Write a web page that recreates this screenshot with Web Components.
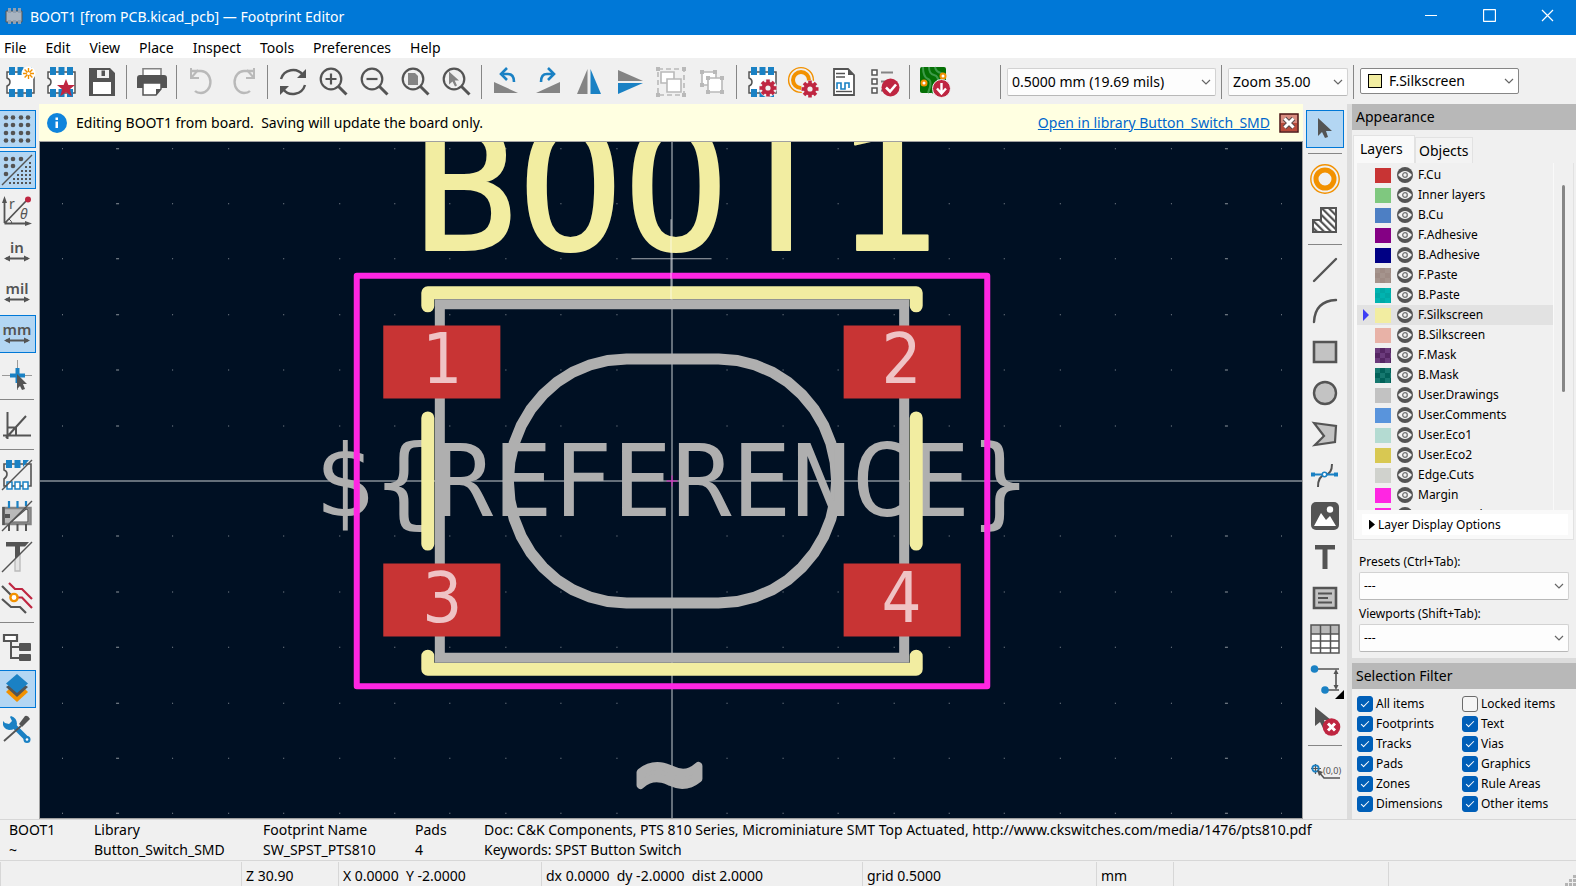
<!DOCTYPE html>
<html lang="en">
<head>
<meta charset="utf-8">
<title>Footprint Editor</title>
<style>
html,body{margin:0;height:100%}
body{font:14px/20px "Noto Sans","Open Sans",sans-serif;color:#000;background:#f0f0f0}
</style>
</head>
<body>
<footprint-editor></footprint-editor>

<script>
const D='#545454', B='#1a81c4', R='#bf2641', O='#f29100', G='#b9b9b9';

const body=`<path d="M2 5v6q3 1 3 4t-3 4v7h27V5z" fill="#fff" stroke="${D}" stroke-width="1.5"/>`;
const pads=`<path d="M4 0h6v8H4zM12.500 0h6v8h-6zM21 0h6v8h-6zM4 22h6v8H4zM12.500 22h6v8h-6zM21 22h6v8h-6z" fill="${B}"/>`;
const gear=(x,y)=>`<g transform="translate(${x} ${y})"><circle r="9" fill="#f0f0f0"/>${[0,45,90,135].map(a=>`<path d="M-1.800-8.500h3.600v17h-3.600z" fill="${R}" transform="rotate(${a})"/>`).join('')}<circle r="6.300" fill="${R}"/><circle r="2.600" fill="#f0f0f0"/></g>`;
const lens=`<circle cx="12" cy="12" r="10.300" fill="none" stroke="${D}" stroke-width="2.200"/><path d="M19.500 19.500l8 8" stroke="${D}" stroke-width="3"/>`;
const arrowEnds=`<path d="M4 21.500h22" stroke="${D}" stroke-width="2"/><path d="M2 21.500l6-3v6zM28 21.500l-6-3v6z" fill="${D}"/>`;
const unit=t=>`<text x="15" y="16" text-anchor="middle" font-size="15" font-weight="600" fill="${D}">${t}</text>${arrowEnds}`;

const ICONS={
 new:body+pads+`<circle cx="23.500" cy="6.500" r="7" fill="#fff"/><path d="M23.500 1v11M18 6.500h11M19.600 2.600l7.800 7.800M27.400 2.600l-7.800 7.800" stroke="${O}" stroke-width="1.400"/><circle cx="23.500" cy="6.500" r="1.600" fill="#fff"/>`,
 lib:body+pads+`<path d="M20 12l2.400 6h6.600l-5.200 4.200 2 7-5.800-4-5.800 4 2-7L11 18h6.600z" fill="${R}"/>`,
 save:`<path d="M3 1h20l5 5v23H2V1zM10 3v8h12V3zM7 16v11h16V16z" fill="${D}" fill-rule="evenodd"/><path d="M10 3h12v8H10z" fill="#f0f0f0"/><path d="M14.500 3.500h3.500v5.500h-3.500z" fill="${D}"/><path d="M6 15h18v12H6z" fill="#fff"/>`,
 print:`<path d="M6 1.800h18v8H6z" fill="#fff" stroke="#848484" stroke-width="1.600"/><path d="M3 8h24q3 0 3 3v10h-6v-4H6v4H0V11q0-3 3-3z" fill="${D}"/><path d="M6 16h18v6l-5 6H6z" fill="#fff" stroke="${D}" stroke-width="1.500"/><path d="M19 28v-6h5z" fill="${D}"/>`,
 undo:`<path d="M5 4h9a9 10.500 0 0 1 0 22q-4 0-6-2" fill="none" stroke="${G}" stroke-width="2.400"/><path d="M4 1v10h8" fill="none" stroke="${G}" stroke-width="2"/><path d="M4 11l7-8" stroke="${G}" stroke-width="2"/>`,
 redo:`<path d="M25 4h-9a9 10.500 0 0 0 0 22q4 0 6-2" fill="none" stroke="${G}" stroke-width="2.400"/><path d="M26 1v10h-8" fill="none" stroke="${G}" stroke-width="2"/><path d="M26 11l-7-8" stroke="${G}" stroke-width="2"/>`,
 refresh:`<path d="M3 12a12.500 12.500 0 0 1 22-4M27 18a12.500 12.500 0 0 1-22 4" fill="none" stroke="${D}" stroke-width="2.400"/><path d="M28 2v9h-9z" fill="${D}"/><path d="M2 28v-9h9z" fill="${D}"/>`,
 zin:lens+`<path d="M12 6.500v11M6.500 12h11" stroke="${D}" stroke-width="2.200"/>`,
 zout:lens+`<path d="M6.500 12h11" stroke="${D}" stroke-width="2.200"/>`,
 zfit:lens+`<path d="M7 6h7l3 3v9H7z" fill="#848484"/>`,
 zsel:lens+`<path d="M7 4.500v13l3.500-3 2.500 5 2-1-2.300-5H17z" fill="#848484"/>`,
 ccw:`<path d="M2 15v11h24z" fill="#848484"/><path d="M11 7h5q6 0 6 8" fill="none" stroke="${B}" stroke-width="2.600"/><path d="M15 1L9 7l6 6" fill="none" stroke="${B}" stroke-width="2.600"/>`,
 cw:`<path d="M27 15v11H3z" fill="#848484"/><path d="M19 7h-5q-6 0-6 8" fill="none" stroke="${B}" stroke-width="2.600"/><path d="M15 1l6 6-6 6" fill="none" stroke="${B}" stroke-width="2.600"/>`,
 mirh:`<path d="M13.500 2v25H3z" fill="#848484"/><path d="M16.500 2v25H27z" fill="${B}"/>`,
 mirv:`<path d="M3 3v11h25z" fill="#848484"/><path d="M3 27V16h25z" fill="${B}"/>`,
 group:`<path d="M2 2h26v26H2z" fill="none" stroke="${G}" stroke-width="1.600" stroke-dasharray="5 3"/><path d="M0 0h4v4H0zM26 0h4v4h-4zM0 26h4v4H0zM26 26h4v4h-4z" fill="${G}"/><path d="M5 5h13v11H5z" fill="#fff" stroke="${G}" stroke-width="1.600"/><path d="M11 12h14v13H11z" fill="#fff" stroke="${G}" stroke-width="1.600"/>`,
 ungroup:`<path d="M5 5h14v13H5z" fill="#fff" stroke="${G}" stroke-width="1.600"/><path d="M11 11h14v14H11z" fill="#fff" stroke="${G}" stroke-width="1.600"/><path d="M3 3h4v4H3zM16 3h4v4h-4zM3 16h4v4H3zM9 9h4v4H9zM23 9h4v4h-4zM9 23h4v4H9zM23 23h4v4h-4z" fill="${G}"/>`,
 fpset:body+pads+gear(21,21),
 padset:`<circle cx="13" cy="13" r="12.400" fill="none" stroke="${O}" stroke-width="1.400"/><circle cx="13" cy="13" r="8" fill="none" stroke="${O}" stroke-width="4"/>`+gear(22,22),
 sheet:`<path d="M5 2h14l6 6v20H5z" fill="#fff" stroke="${D}" stroke-width="1.800"/><path d="M19 2v6h6z" fill="${D}"/><path d="M7 6.500h9M7 10h9" stroke="${D}" stroke-width="1.300"/><path d="M7 24.500h16" stroke="${D}" stroke-width="1.400"/><path d="M8 22v-6h4v6h4v-6h4v5" fill="none" stroke="${B}" stroke-width="1.600"/>`,
 drc:`<path d="M2 3h5v5H2zM2 12h5v5H2zM2 21h5v5H2z" fill="#fff" stroke="${D}" stroke-width="1.500"/><path d="M11 5.500h12M11 14.500h7M11 23.500h3" stroke="#848484" stroke-width="2"/><circle cx="20.500" cy="20.500" r="9" fill="${R}"/><path d="M16 20.500l4 4 6-7" fill="none" stroke="#fff" stroke-width="2.600"/>`,
 board:`<rect width="26" height="26" rx="2" fill="#057005"/><path d="M9 0q0 7 5 8t4 8-6 10M15 0q1 5 6 6t3 8M3 0q0 10 5 12t0 14" fill="none" stroke="#3d9a4a" stroke-width="2"/><circle cx="4" cy="16" r="2.500" fill="#fff" stroke="${O}" stroke-width="2"/><circle cx="23" cy="9" r="2.500" fill="#fff" stroke="${O}" stroke-width="2"/><circle cx="21.500" cy="21.500" r="9" fill="${R}" stroke="#f0f0f0"/><path d="M21.500 16v10M17 21.500l4.500 5 4.500-5" fill="none" stroke="#fff" stroke-width="2.400"/>`,
 grid:[3.5,11,19,26.5].map(y=>[4,11,19,26].map(x=>`<circle cx="${x}" cy="${y}" r="2.300" fill="${D}"/>`).join('')).join(''),
 gridov:`<path d="M0 30L30 0" stroke="${D}" stroke-width="1.400"/>`+[[4,4],[11,4],[19,4],[4,11],[11,11],[4,19]].map(p=>`<circle cx="${p[0]}" cy="${p[1]}" r="2.300" fill="${D}"/>`).join('')+[8,12,16,20,24,28].map((y,j)=>[28,24,20,16,12,8].slice(0,j+1).map(x=>`<rect x="${x-1}" y="${y-1}" width="2" height="2" fill="${D}"/>`).join('')).join(''),
 polar:`<path d="M2.500 27V4M2.500 27.500H26M2.500 27.500L25 4" stroke="${D}" stroke-width="1.800" fill="none"/><path d="M0 7l2.500-7L5 7zM23 25l7 2.500-7 2.500z" fill="${D}"/><circle cx="26" cy="3.500" r="3" fill="${R}"/><text x="7" y="13" font-size="14" fill="${D}">r</text><text x="18" y="23" font-size="14" font-style="italic" fill="${D}">θ</text><path d="M7 23q3 2 3 5" stroke="${D}" fill="none"/>`,
 inch:unit('in'), mil:unit('mil'), mm:unit('mm'),
 cross:`<path d="M0 15.500h30M15.500 0v30" stroke="#9a9a9a" stroke-width="1"/><path d="M15.500 8v15M8 15.500h15" stroke="${B}" stroke-width="4"/><path d="M15 14v15l3-3 2 4 3-1-2-5h4z" fill="${D}"/>`,
 angle:`<path d="M5.500 2v27M1 25.500h28M4 28L24 6M5 17.500h9v8" fill="none" stroke="${D}" stroke-width="2"/>`,
 padsk:`<path d="M2 4v6q3 1 3 4t-3 5v7h27V4z" fill="none" stroke="${D}" stroke-width="1.600"/><path d="M4 0h6v8H4zM12.500 0h6v8h-6zM21 0h6L21 7z" fill="${B}"/><path d="M5 22h5v7H5zM13 22h5v7h-5zM21 22h5v7h-5z" fill="#fff" stroke="${B}" stroke-width="1.500"/><path d="M0 30L30 0" stroke="${D}" stroke-width="1.400"/>`,
 chipsk:`<path d="M1.500 7h27v16h-27z" fill="#b9b9b9" stroke="#848484" stroke-width="2.500"/><path d="M26 9v12H9L24 8z" fill="#f0f0f0" stroke="${D}" stroke-width="1.200"/><path d="M1.500 6v18" stroke="${D}" stroke-width="2.500"/><path d="M3 13h5v4H3z" fill="${D}"/><path d="M7 0v7M15.500 0v7M24 0v5" stroke="${B}" stroke-width="2.200"/><path d="M7 23v7M15.500 23v7M24 23v7" stroke="${D}" stroke-width="2"/><path d="M0 30L30 0" stroke="${D}" stroke-width="1.400"/>`,
 textsk:`<path d="M4 0h23l-4 4.500h-5V12l-5 5V4.500H4z" fill="${D}"/><path d="M13 17v12h5V12" fill="#e4e4e4" stroke="#b9b9b9" stroke-width="1.300"/><path d="M0 30L30 0" stroke="${D}" stroke-width="1.400"/>`,
 contrast:`<path d="M0 3l10 10M0 16l9 8h9l6 6" fill="none" stroke="${D}" stroke-width="2.200"/><path d="M7 0l6 6h7l10 10M15 14.500h5L30 25" fill="none" stroke="${R}" stroke-width="2.200"/><circle cx="12" cy="14.500" r="3.600" fill="#fff" stroke="${O}" stroke-width="2.400"/>`,
 tree:`<path d="M2 2h13v6H2z" fill="#fff" stroke="${D}" stroke-width="2.200"/><path d="M9 9v16h8M9 14h8" fill="none" stroke="${D}" stroke-width="2"/><rect x="17" y="10" width="12" height="8" rx="1" fill="${D}"/><rect x="17" y="21" width="12" height="7" rx="1" fill="${D}"/>`,
 layers:`<path d="M4 18l11 10 11-10-3-3H7z" fill="${O}"/><path d="M4 13l11 10 11-10-3-2H7z" fill="${D}"/><path d="M15 0l11 9.500L15 19 4 9.500z" fill="${B}"/>`,
 tools:`<path d="M9 8l16 16" stroke="${B}" stroke-width="5"/><path d="M1 6q-1 8 6 9 7 0 8-6 0-6-6-8l-1 1 2 4-3 3-4-1z" fill="${B}"/><circle cx="25" cy="24.500" r="3.500" fill="${B}"/><circle cx="25" cy="24.500" r="1.300" fill="#fff"/><path d="M2 26L19 11" stroke="${D}" stroke-width="1.800"/><path d="M17 9l6-8q3-1 5 3l-8 8z" fill="${D}"/>`,
 select:`<path d="M8 4v18l4-4 3 6 3-1-2-6h6z" fill="${D}"/>`,
 pad:`<circle cx="15" cy="15" r="14.200" fill="none" stroke="${O}" stroke-width="1.400"/><circle cx="15" cy="15" r="9" fill="none" stroke="${O}" stroke-width="5"/>`,
 zone:`<defs><pattern id="h" width="5" height="5" patternUnits="userSpaceOnUse" patternTransform="rotate(-45)"><path d="M0 0h2.200v5H0z" fill="${D}"/></pattern></defs><path d="M11 3h15v24H3V15h8z" fill="#fff"/><path d="M11 3h15v24H3V15h8z" fill="url(#h)" stroke="${D}" stroke-width="2"/>`,
 line:`<path d="M4 26L26 4" stroke="${D}" stroke-width="2.400" stroke-linecap="round"/>`,
 arc:`<path d="M4 26Q5 5 26 4" fill="none" stroke="${D}" stroke-width="2.400" stroke-linecap="round"/>`,
 rect:`<path d="M4 5h22v20H4z" fill="#c3c3c3" stroke="${D}" stroke-width="2.600"/>`,
 circle:`<circle cx="15" cy="15" r="11" fill="#c3c3c3" stroke="${D}" stroke-width="2.400"/>`,
 poly:`<path d="M4 4l22 3-1 16-20 3 9-9z" fill="#c3c3c3" stroke="${D}" stroke-width="2.200"/>`,
 bezier:`<path d="M8 27q0-11 7-12t7-11" fill="none" stroke="${D}" stroke-width="2"/><path d="M4 14.500h22" stroke="${B}" stroke-width="2"/><path d="M1 12.500h4v4H1zM24 12.500h4v4h-4z" fill="${B}"/><circle cx="14.500" cy="14.500" r="2.200" fill="#fff" stroke="${B}" stroke-width="1.500"/>`,
 image:`<rect x="1" y="1" width="28" height="28" rx="5" fill="${D}"/><path d="M4 25l7-13 5 7 4-4 6 10z" fill="#fff"/><circle cx="20" cy="8.500" r="3.200" fill="#fff"/>`,
 text:`<path d="M5 3h20v4.500h-7.500V27h-5V7.500H5z" fill="${D}"/>`,
 textbox:`<path d="M4 5h22v20H4z" fill="#c3c3c3" stroke="${D}" stroke-width="2.600"/><path d="M8 10.500h14M8 15h10M8 19.500h14" stroke="${D}" stroke-width="2"/>`,
 table:`<path d="M1 1h28v28H1z" fill="#fff"/><path d="M1 1h28v9H1z" fill="#b9b9b9"/><path d="M1 1h28v28H1zM1 10h28M1 17h28M1 24h28M10.500 1v28M20.500 1v28" fill="none" stroke="${D}" stroke-width="1.500"/>`,
 dim:`<path d="M4 4h25M15 25h14M26 6v17" stroke="${D}" stroke-width="1.600"/><path d="M26 4l2.500 5h-5zM26 25l2.500-5h-5z" fill="${D}"/><circle cx="4.500" cy="4" r="3.800" fill="${B}"/><circle cx="15" cy="25" r="3.800" fill="${B}"/><path d="M34 25v9h-9z"/>`,
 del:`<path d="M5 1v19l5-4 3 6 4-1-3-7h7z" fill="${D}"/><circle cx="21.500" cy="21" r="8.800" fill="${R}"/><path d="M18 17.500l7 7M25 17.500l-7 7" stroke="#fff" stroke-width="3"/>`,
 anchor:`<path d="M5.500 8v10M1 12.500h10" stroke="${D}" stroke-width="1.200"/><circle cx="5.500" cy="12.500" r="3.200" fill="none" stroke="${B}" stroke-width="1.800"/><path d="M8 15l6 7h16" fill="none" stroke="${D}" stroke-width="1.600"/><path d="M7 14l6 2-4 4z" fill="${D}"/><text x="13" y="18" font-size="9" fill="${D}">(0,0)</text>`
};

const define=(name,html,setup)=>customElements.define(name,class extends HTMLElement{
  connectedCallback(){
    if(this.shadowRoot)return;
    const root=this.attachShadow({mode:'open'});
    root.innerHTML=typeof html==='function'?html(this):html;
    if(setup)setup(root,this);
  }
});

define('tool-button',el=>`<style>
:host{display:block;flex:none;width:38px;height:38px}
button{display:block;width:38px;height:38px;padding:3px;border:1px solid transparent;background:none;font:inherit}
:host([active]) button{background:#b3d6f3;border-color:#0078d7}
svg{display:block;width:30px;height:30px;overflow:visible}
</style><button type="button" aria-label="${el.getAttribute('label')}" ${el.hasAttribute('off')?'disabled':''}><svg viewBox="0 0 30 30" aria-hidden="true">${ICONS[el.getAttribute('icon')]}</svg></button>`);

define('tool-rule',`<style>
:host{display:block;flex:none;width:6px;height:34px;background:linear-gradient(#868686,#868686) 2px 0/1px 100% no-repeat}
:host([flat]){width:34px;height:6px;background:linear-gradient(#868686,#868686) 0 2px/100% 1px no-repeat}
</style>`);

const tools=(list,flat)=>list.map(t=>t==='-'?`<tool-rule${flat?' flat':''}></tool-rule>`:`<tool-button icon="${t[0]}" label="${t[1]}" ${t[2]||''}></tool-button>`).join('');

define('drop-down',el=>`<style>
:host{display:block;position:relative;flex:none}
select{box-sizing:border-box;display:block;width:100%;height:28px;appearance:none;border:1px solid #d2d2d2;border-bottom-color:#b8b8b8;border-radius:2px;background:#fdfdfd;color:#000;font:inherit;padding:0 20px 0 4px}
:host([strong]) select{height:26px;border-color:#868686;padding-left:28px;background:#fff}
svg{position:absolute;right:5px;top:10px;width:10px;height:8px}
i{display:none;position:absolute;left:8px;top:6px;width:12px;height:12px;border:1px solid #000;background:#f2eda1}
:host([strong]) i{display:block}
:host([strong]) svg{top:9px}
</style><select aria-label="${el.getAttribute('label')}"><option>${el.getAttribute('value')}</option></select><i></i>
<svg viewBox="0 0 10 8" aria-hidden="true"><path d="M1 2l4 4 4-4" fill="none" stroke="#666" stroke-width="1.200"/></svg>`);

define('title-bar',`<style>
:host{display:flex;align-items:center;height:35px;background:#0078d7;color:#fff;flex:none}
.logo{width:18px;height:18px;margin:0 7px 4px 5px}
h1{font:inherit;margin:0 auto 2px 0}
button{width:58px;height:35px;border:0;padding:0 0 4px;background:none;display:grid;place-items:center}
button svg{width:13px;height:13px}
</style>
<svg class="logo" viewBox="0 0 18 18" aria-hidden="true"><path d="M1 4h16v11H1z" fill="#a9b4c0" stroke="#545454"/><path d="M3 1h3v5H3zM8 1h3v5H8zM13 1h3v5h-3zM3 13h3v4H3zM8 13h3v4H8zM13 13h3v4h-3z" fill="#8fa0b3"/></svg>
<h1>BOOT1 [from PCB.kicad_pcb] — Footprint Editor</h1>
<button type="button" aria-label="Minimize"><svg viewBox="0 0 13 13"><path d="M0 6.500h12" stroke="#fff"/></svg></button>
<button type="button" aria-label="Maximize"><svg viewBox="0 0 13 13"><rect x=".5" y=".5" width="12" height="12" rx="1" fill="none" stroke="#fff" stroke-width="1.300"/></svg></button>
<button type="button" aria-label="Close"><svg viewBox="0 0 13 13"><path d="M1 1l11 11M12 1L1 12" stroke="#fff" stroke-width="1.200"/></svg></button>`);

define('menu-bar',`<style>
:host{display:flex;gap:19px;height:23px;padding:2px 4px 0;background:#fff;flex:none;box-sizing:border-box}
button{border:0;padding:0;background:none;font:inherit;color:inherit;line-height:20px}
</style>`+['File','Edit','View','Place','Inspect','Tools','Preferences','Help'].map(t=>`<button type="button">${t}</button>`).join(''));

define('top-tools',`<style>
:host{display:flex;align-items:center;gap:3px;height:46px;padding:2px 20px 0 1px;box-sizing:border-box;flex:none}
.gap{flex:0 1 38px}
.grid{width:209px}.zoom{width:120px}.layer{width:159px;margin-bottom:2px}
</style>`+tools([['new','New footprint'],['lib','New footprint in library'],['save','Save'],'-',['print','Print'],'-',['undo','Undo','off'],['redo','Redo','off'],'-',['refresh','Refresh'],['zin','Zoom in'],['zout','Zoom out'],['zfit','Zoom to fit'],['zsel','Zoom to selection'],'-',['ccw','Rotate left'],['cw','Rotate right'],['mirh','Mirror horizontally'],['mirv','Mirror vertically'],['group','Group','off'],['ungroup','Ungroup','off'],'-',['fpset','Footprint properties'],['padset','Default pad properties'],['sheet','Datasheet'],['drc','Check footprint'],'-',['board','Load footprint from board']])+
`<span class="gap"></span><tool-rule></tool-rule><drop-down class="grid" label="Grid" value="0.5000 mm (19.69 mils)"></drop-down><tool-rule></tool-rule><drop-down class="zoom" label="Zoom" value="Zoom 35.00"></drop-down><tool-rule></tool-rule><drop-down class="layer" strong label="Active layer" value="F.Silkscreen"></drop-down>`);

define('left-tools',`<style>
:host{display:flex;flex-direction:column;gap:3px;flex:none;width:39px;padding-top:6px;box-sizing:border-box;overflow:hidden}
tool-button{margin-left:-2px}
</style>`+tools([['grid','Show grid','active'],['gridov','Grid overrides','active'],['polar','Polar coordinates'],['inch','Inches'],['mil','Mils'],['mm','Millimetres','active'],['cross','Full-window crosshair'],'-',['angle','Constrain angle'],'-',['padsk','Sketch pads'],['chipsk','Sketch graphics'],['textsk','Sketch text'],['contrast','High contrast'],'-',['tree','Library tree'],['layers','Layers manager','active'],['tools','Properties']],1));

define('right-tools',`<style>
:host{display:flex;flex-direction:column;align-items:center;gap:3px;flex:none;width:44px;padding-top:6px;box-sizing:border-box}
</style>`+tools([['select','Select','active'],'-',['pad','Add pad'],['zone','Add rule area'],'-',['line','Draw line'],['arc','Draw arc'],['rect','Draw rectangle'],['circle','Draw circle'],['poly','Draw polygon'],['bezier','Draw curve'],['image','Add image'],['text','Add text'],['textbox','Add text box'],['table','Add table'],['dim','Add dimension'],['del','Delete'],'-',['anchor','Set origin']],1));

define('info-bar',`<style>
:host{display:flex;align-items:center;height:37px;flex:none;background:#ffffe1;padding:0 4px 0 8px;box-sizing:border-box}
svg{flex:none}
p{margin:0 auto 0 9px;white-space:pre}
a{color:#0066cc;margin-right:9px}
button{width:20px;height:20px;padding:0;border:0;background:none}
button svg{display:block}
</style>
<svg width="20" height="20" viewBox="0 0 20 20" aria-hidden="true"><circle cx="10" cy="10" r="10" fill="#0f84dc"/><path d="M8.500 8.500H11V15H8.500zM8.500 4.500H11V7H8.500z" fill="#fff"/></svg>
<p>Editing BOOT1 from board.  Saving will update the board only.</p>
<a href="#library">Open in library Button_Switch_SMD</a>
<button type="button" aria-label="Dismiss"><svg width="20" height="20" viewBox="0 0 20 20"><rect x="1" y="1" width="18" height="18" fill="#d98c80" stroke="#4b1414" stroke-width="1.500"/><path d="M2 10h16v8H2z" fill="#b84a3a"/><path d="M5.500 5.500l9 9M14.500 5.500l-9 9" stroke="#5a4a4a" stroke-width="5"/><path d="M5.500 5.500l9 9M14.500 5.500l-9 9" stroke="#fff" stroke-width="3"/></svg></button>`);

/* Body outline: straight top and bottom, each end a half circle in 9 degree chords. */
const outline=(()=>{const p=[];
 for(let a=0;a<=180;a+=9)p.push([718+118*Math.sin(a*Math.PI/180),481.5-122*Math.cos(a*Math.PI/180)]);
 for(let a=180;a<=360;a+=9)p.push([626+118*Math.sin(a*Math.PI/180),481.5-122*Math.cos(a*Math.PI/180)]);
 return p.map(q=>q.map(v=>v.toFixed(1)).join(',')).join(' ');})();
const dots=(()=>{let d='';for(let i=-30;i<=30;i++)for(let j=-12;j<=12;j++){if(!i||!j)continue;
 const w=i%10?1:3;d+=`M${Math.round(671+i*55.4)-(w>>1)} ${Math.round(481+j*55.4)}h${w}v1h-${w}z`}return d})();

define('board-canvas',`<style>
:host{display:block;flex:1;min-height:0;border:1px solid #a0a0a0;background:#001023;overflow:hidden}
svg{display:block;width:100%;height:100%}
text{font-family:"DejaVu Sans Mono",monospace}
.num{font-family:"DejaVu Sans Condensed","DejaVu Sans",sans-serif;font-size:70px;fill:#efc3c5;text-anchor:middle}
</style>
<svg viewBox="40 142 1261 677" preserveAspectRatio="xMidYMid slice" role="img" aria-label="Footprint drawing">
<path d="${dots}" fill="#8b939b"/>
<path d="M-400 481.500h2200M671.500-200v1400" stroke="#c8cdd2"/>
<path d="M427.500 306.500v-13h488v13M427.500 656.500v13h488v-13" fill="none" stroke="#f2eda1" stroke-width="13" stroke-linecap="round" stroke-linejoin="round"/>
<g fill="none" stroke="#afafaf"><path d="M439.500 305h464v353h-464z" stroke-width="10"/><polygon points="${outline}" stroke-width="11"/></g>
<text x="314" y="516" font-size="99" fill="#afafaf">\${REFERENCE}</text>
<path d="M427.500 418.500v126M915.500 418.500v126" fill="none" stroke="#f2eda1" stroke-width="13" stroke-linecap="round"/>
<text x="412" y="251" font-size="175" fill="#f2eda1" stroke="#f2eda1" stroke-width="2" stroke-linejoin="round">BOOT1</text>
<text x="669" y="810" font-size="112" font-weight="700" text-anchor="middle" fill="#afafaf" stroke="#afafaf" stroke-width="8" stroke-linejoin="round">~</text>
<rect x="356.500" y="276.500" width="630" height="410" fill="none" stroke="#ff26e2" stroke-width="6" stroke-linejoin="round"/>
<path d="M383 326h117v73H383zM843 326h117v73H843zM383 564h117v73H383zM843 564h117v73H843z" fill="#c83434"/>
<text class="num" x="442" y="384">1</text><text class="num" x="901" y="384">2</text><text class="num" x="442" y="622">3</text><text class="num" x="901" y="622">4</text>
<path d="M666 481.500h11M671.500 476v11" stroke="#d81ec0"/>
<path d="M631 259.500h80M670.500 220v80" stroke="#fff" stroke-opacity=".65"/>
</svg>`);

const LAYERS=[['F.Cu','#c83434'],['Inner layers','#7fc87f'],['B.Cu','#4d7fc4'],['F.Adhesive','#840084'],['B.Adhesive','#000084'],['F.Paste','#a5948d','#9f8c85'],['B.Paste','#00b3b0','#00a9a6'],['F.Silkscreen','#f2eda1'],['B.Silkscreen','#e8b2a7'],['F.Mask','#6b3b7c','#562664'],['B.Mask','#16786f','#026259'],['User.Drawings','#c2c2c2'],['User.Comments','#5994dc'],['User.Eco1','#b4dbd2'],['User.Eco2','#d8c852'],['Edge.Cuts','#d0d2cd'],['Margin','#ff26e2'],['F.Courtyard','#ff26e2']];

define('layer-row',el=>`<style>
:host{display:flex;align-items:center;height:20px;padding-left:6px;font-size:12px}
:host([current]){background:#e2e2e2}
.mark{width:6px;height:12px;margin-right:6px;flex:none}
:host([current]) .mark{background:#3f3ff5;clip-path:polygon(0 0,100% 50%,0 100%)}
.chip{width:16px;height:15px;flex:none;background:conic-gradient(var(--b) 25%,var(--a) 0 50%,var(--b) 0 75%,var(--a) 0) 0 0/10px 10px}
button{width:16px;height:16px;padding:0;margin:0 5px 0 6px;border:0;background:none}
svg{display:block}
</style><span class="mark"></span><span class="chip" style="--a:${el.getAttribute('a')};--b:${el.getAttribute('b')}"></span><button type="button" aria-label="Toggle visibility"><svg width="16" height="16" viewBox="0 0 16 16"><circle cx="8" cy="8" r="8" fill="${D}"/><path d="M1 8q7-8 14 0-7 8-14 0z" fill="#f0f0f0"/><circle cx="8" cy="8" r="2.300" fill="none" stroke="#747474" stroke-width="1.300"/></svg></button><slot></slot>`);

define('appearance-panel',`<style>
:host{display:flex;flex-direction:column;flex:1;min-height:0;font-size:12px}
h2{margin:0;height:26px;line-height:26px;padding-left:4px;background:#b8b8b8;font-size:14px;font-weight:400;flex:none}
.tabs{display:flex;align-items:flex-end;margin:5px 0 0 1px;flex:none}
.tabs button{height:26px;padding:0 3px;border:1px solid #e2e2e2;border-bottom:0;background:#f3f3f3;font:inherit;font-size:14px}
.tabs button[aria-selected=true]{height:28px;width:62px;background:#f9f9f9;padding:0 6px 2px;text-align:left}
.book{display:flex;flex-direction:column;flex:1;min-height:0;margin:0 2px 0 1px;padding-left:3px;border:1px solid #e2e2e2;border-top:0;background:#f9f9f9}
.list{display:flex;flex:1;min-height:0;overflow:hidden;background:#f0f0f0}
.rows{width:196px;height:100%;overflow:hidden;padding-top:2px;box-sizing:border-box}
.bar{flex:1;border-left:1px solid #f9f9f9}
.bar i{display:block;width:3px;height:207px;margin:22px 0 0 8px;border-radius:2px;background:#868686}
details{margin:4px 5px 4px;background:#fff;padding-left:7px;line-height:21px;flex:none}
summary{list-style:none;display:flex;align-items:center;gap:3px}
summary::before{content:"";width:6px;height:10px;background:#000;clip-path:polygon(0 0,100% 50%,0 100%)}
.sets{padding:12px 7px 6px;flex:none}
label{display:block;line-height:20px}
drop-down+label{margin-top:4px}
</style>
<h2>Appearance</h2>
<div class="tabs" role="tablist"><button type="button" role="tab" aria-selected="true">Layers</button><button type="button" role="tab" aria-selected="false">Objects</button></div>
<div class="book"><div class="list"><div class="rows">${LAYERS.map(l=>`<layer-row a="${l[1]}" b="${l[2]||l[1]}" ${l[0]==='F.Silkscreen'?'current':''}>${l[0]}</layer-row>`).join('')}</div><div class="bar"><i></i></div></div>
<details><summary>Layer Display Options</summary></details></div>
<div class="sets"><label>Presets (Ctrl+Tab):</label><drop-down label="Presets" value="---"></drop-down><label>Viewports (Shift+Tab):</label><drop-down label="Viewports" value="---"></drop-down></div>`);

define('selection-filter',`<style>
:host{display:block;flex:none;border-top:5px solid #dcdcdc;font-size:12px}
h2{margin:0;height:26px;line-height:26px;padding-left:4px;background:#b8b8b8;font-size:14px;font-weight:400}
div{display:grid;grid-template-columns:105px 1fr;grid-auto-rows:20px;padding:5px 0 5px 5px}
label{display:flex;align-items:center;gap:3px}
input{appearance:none;box-sizing:border-box;width:16px;height:16px;margin:0;border:1px solid #6b6b6b;border-radius:3px;background:#f5f5f5;display:grid;place-items:center}
input:checked{background:#005fb8;border-color:#005fb8}
input:checked::before{content:"";width:8px;height:4px;margin-top:-3px;box-sizing:border-box;border:solid #fff;border-width:0 0 1px 1px;rotate:-45deg}
</style><h2>Selection Filter</h2><div>${['All items','Locked items','Footprints','Text','Tracks','Vias','Pads','Graphics','Zones','Rule Areas','Dimensions','Other items'].map(t=>`<label><input type="checkbox" ${t==='Locked items'?'':'checked'}>${t}</label>`).join('')}</div>`);

define('detail-panel',`<style>
:host{display:flex;height:41px;border-top:1px solid #d7d7d7;padding:0 9px;box-sizing:border-box;flex:none;white-space:pre}
div{flex:none;line-height:20px}
.a{width:85px}.b{width:169px}.c{width:152px}.d{width:69px}
</style><div class="a">BOOT1<br>~</div><div class="b">Library<br>Button_Switch_SMD</div><div class="c">Footprint Name<br>SW_SPST_PTS810</div><div class="d">Pads<br>4</div><div>Doc: C&amp;K Components, PTS 810 Series, Microminiature SMT Top Actuated, http://www.ckswitches.com/media/1476/pts810.pdf<br>Keywords: SPST Button Switch</div>`);

define('status-bar',`<style>
:host{display:flex;height:26px;border-top:1px solid #d7d7d7;padding-top:1px;box-sizing:border-box;flex:none;position:relative;white-space:pre}
span{flex:none;box-sizing:border-box;border-left:1px solid #d7d7d7;padding-left:4px;line-height:27px;overflow:hidden}
span:first-child{border:0}
svg{position:absolute;right:0;bottom:0}
</style><span style="width:241px"></span><span style="width:97px">Z 30.90</span><span style="width:203px">X 0.0000  Y -2.0000</span><span style="width:321px">dx 0.0000  dy -2.0000  dist 2.0000</span><span style="width:234px">grid 0.5000</span><span style="width:77px">mm</span><span style="width:215px"></span><span></span>
<svg width="12" height="12" viewBox="0 0 12 12" aria-hidden="true"><path d="M9 1h3v3H9zM5 5h3v3H5zM9 5h3v3H9zM1 9h3v3H1zM5 9h3v3H5zM9 9h3v3H9z" fill="#b4b4b4"/></svg>`);

define('footprint-editor',`<style>
:host{display:flex;flex-direction:column;height:100vh;overflow:hidden}
main{display:flex;flex:1;min-height:0}
.work{display:flex;flex-direction:column;flex:1;min-width:0}
.side{display:flex;flex-direction:column;flex:none;width:224px;border-left:5px solid #dcdcdc}
</style>
<title-bar></title-bar><menu-bar></menu-bar><top-tools></top-tools>
<main><left-tools></left-tools><div class="work"><info-bar></info-bar><board-canvas></board-canvas></div><right-tools></right-tools>
<div class="side"><appearance-panel></appearance-panel><selection-filter></selection-filter></div></main>
<detail-panel></detail-panel><status-bar></status-bar>`);
</script>
</body>
</html>
